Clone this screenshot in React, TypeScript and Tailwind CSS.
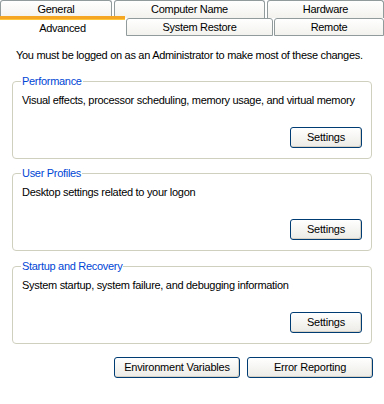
import React from "react";

const font = { fontFamily: '"Liberation Sans", Arial, sans-serif' };

const Tab: React.FC<{ label: string; className?: string }> = ({ label, className = "" }) => (
  <div
    className={`flex items-center justify-center border-t border-l border-r border-[#919b9c] rounded-t-[3px] bg-gradient-to-b from-white to-[#f3f2ee] text-black ${className}`}
  >
    {label}
  </div>
);

const XpButton: React.FC<{ label: string; className?: string }> = ({ label, className = "" }) => (
  <button
    className={`h-[21px] border border-[#003c74] rounded-[3px] bg-gradient-to-b from-white to-[#ecebe6] shadow-[inset_-1px_-1px_0_#d6d0c5] text-black text-[11px] leading-none tracking-[-0.2px] ${className}`}
  >
    {label}
  </button>
);

const GroupBox: React.FC<{ title: string; text: string; className?: string }> = ({
  title,
  text,
  className = "",
}) => (
  <fieldset className={`border border-[#d0d0bf] rounded-[4px] mx-[12px] pl-[9px] pr-[9px] pb-[10px] ${className}`}>
    <legend className="-ml-[1px] px-[1px] text-[#0046d5] leading-[13px]">{title}</legend>
    <p className="mt-[6px] leading-[13px] whitespace-nowrap">{text}</p>
    <div className="flex justify-end mt-[20px]">
      <XpButton label="Settings" className="w-[72px]" />
    </div>
  </fieldset>
);

export default function App() {
  return (
    <div
      className="w-[384px] h-[404px] bg-white text-[11px] tracking-[-0.3px] overflow-hidden"
      style={font}
    >
      {/* tab strip */}
      <div className="flex h-[18px] gap-[2px]">
        <Tab label="General" className="w-[112px]" />
        <Tab label="Computer Name" className="w-[151px]" />
        <Tab label="Hardware" className="flex-1" />
      </div>
      <div className="flex h-[20px] -mt-[2px] gap-[1px]">
        <div className="w-[125px] flex items-start justify-center pt-[1px] bg-white border-t-[3px] border-[#f5a623] relative">
          <span className="absolute left-0 right-0 top-0 h-[1px] bg-[#ffc83c]" />
          Advanced
        </div>
        <Tab label="System Restore" className="w-[147px] mt-[2px] border-b" />
        <Tab label="Remote" className="flex-1 mt-[2px] border-b" />
      </div>

      <p className="mt-[13px] pl-[16px] leading-[13px] whitespace-nowrap">
        You must be logged on as an Administrator to make most of these changes.
      </p>

      <GroupBox
        className="mt-[13px]"
        title="Performance"
        text="Visual effects, processor scheduling, memory usage, and virtual memory"
      />
      <GroupBox className="mt-[8px]" title="User Profiles" text="Desktop settings related to your logon" />
      <GroupBox
        className="mt-[9px]"
        title="Startup and Recovery"
        text="System startup, system failure, and debugging information"
      />

      <div className="flex justify-end gap-[7px] pr-[11px] mt-[13px]">
        <XpButton label="Environment Variables" className="w-[126px]" />
        <XpButton label="Error Reporting" className="w-[126px]" />
      </div>
    </div>
  );
}
